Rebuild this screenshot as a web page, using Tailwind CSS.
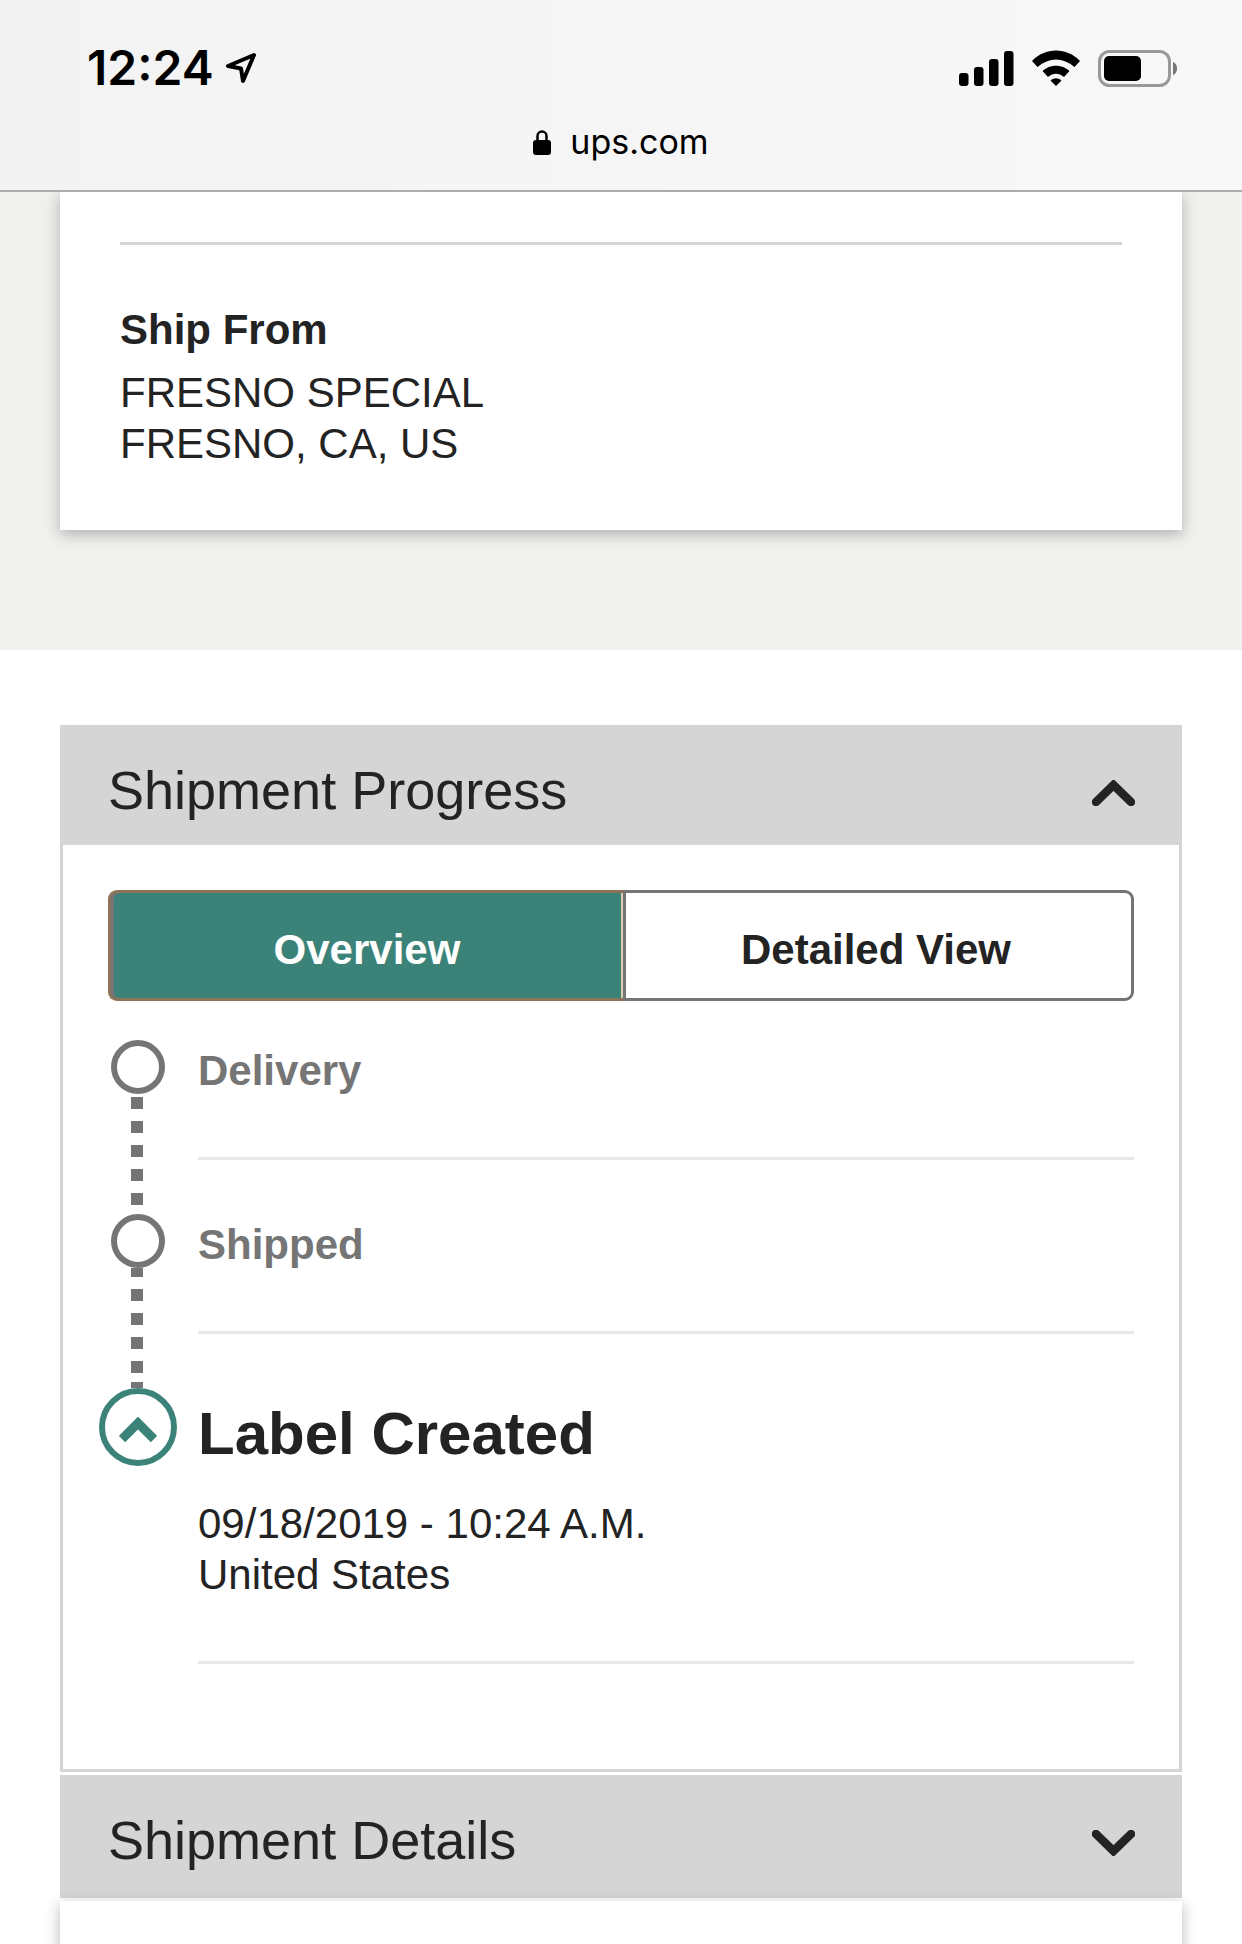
<!DOCTYPE html>
<html>
  <head>
    <meta charset="UTF-8" />
    <script src="https://cdn.jsdelivr.net/npm/@tailwindcss/browser@4"></script>
  </head>
  <body class="bg-white font-['Liberation_Sans',Arial,sans-serif] text-[#232323]">
    <div class="h-[1944px] w-[1242px] overflow-hidden">
      <!-- browser chrome -->
      <header class="relative z-10 h-[192px] bg-linear-to-r from-[#f3f3f3] to-[#f8f8f8] border-b-2 border-[#acacac] flex flex-col">
        <div class="flex justify-between items-center h-[68px] mt-[34px] pl-[87px] pr-[65px]">
          <div class="flex items-center gap-[11px]">
            <span class="font-['Inter',sans-serif] font-semibold text-[48px] leading-none text-black">12:24</span>
            <svg class="w-[32px] h-[34px]" viewBox="0 0 32 34" fill="none" stroke="#000" stroke-width="4" stroke-linejoin="round">
              <path d="M29 4 L3 15 L16 17.5 L18 30 Z" />
            </svg>
          </div>
          <div class="flex items-center gap-[18px]">
            <svg class="w-[55px] h-[35px]" viewBox="0 0 55 35" fill="#000">
              <rect x="0" y="22" width="9.5" height="13" rx="3" />
              <rect x="15" y="16" width="9.5" height="19" rx="3" />
              <rect x="30" y="8" width="9.5" height="27" rx="3" />
              <rect x="45" y="0" width="9.5" height="35" rx="3" />
            </svg>
            <svg class="w-[48px] h-[36px]" viewBox="0 0 48 36" fill="#000">
              <path d="M0 11 C13 -3 35 -3 48 11 L42.5 17 C31 7 17 7 5.5 17 Z" />
              <path d="M10.5 21 C18 14 30 14 37.5 21 L32 27 C27 22.5 21 22.5 16 27 Z" />
              <path d="M24 36 L18.5 30.5 C22 27.5 26 27.5 29.5 30.5 Z" />
            </svg>
            <svg class="w-[79px] h-[37px]" viewBox="0 0 79 37">
              <rect x="1.5" y="1.5" width="70" height="34" rx="10" fill="none" stroke="#999999" stroke-width="3" />
              <rect x="6" y="6" width="37" height="25" rx="5" fill="#000" />
              <path d="M75 12 C78 13 79 16 79 18.5 C79 21 78 24 75 25 Z" fill="#777777" />
            </svg>
          </div>
        </div>
        <div class="flex justify-center items-center gap-[19px] mt-[18px]">
          <svg class="w-[18px] h-[26px]" viewBox="0 0 18 26">
            <path d="M4.5 12 V7 a4.5 4.5 0 0 1 9 0 V12" fill="none" stroke="#000" stroke-width="2.5" />
            <rect x="0" y="11" width="18" height="15" rx="3" fill="#000" />
          </svg>
          <span class="font-['Inter',sans-serif] text-[34px] leading-[44px] text-black">ups.com</span>
        </div>
      </header>

      <!-- ship from card -->
      <section class="bg-[#f0f0ee] h-[458px] px-[60px]">
        <div class="bg-white h-[338px] px-[60px] pt-[50px] shadow-[0_4px_14px_rgba(0,0,0,0.28)]">
          <div class="h-[3px] bg-[#d5d5d5]"></div>
          <h3 class="font-bold text-[42px] leading-[48px] mt-[61px]">Ship From</h3>
          <p class="text-[42px] leading-[51px] mt-[13px]">FRESNO SPECIAL<br />FRESNO, CA, US</p>
        </div>
      </section>

      <!-- accordions -->
      <section class="px-[60px] pt-[75px]">
        <div class="h-[120px] bg-[#d5d5d5] flex items-center justify-between pl-[48px] pr-[47px]">
          <h2 class="text-[54px] leading-none mt-[10px]">Shipment Progress</h2>
          <svg class="w-[43px] h-[26px] mt-[16px]" viewBox="0 0 43 26" fill="none" stroke="#232323" stroke-width="8.5" stroke-linecap="round" stroke-linejoin="miter">
            <path d="M4 22 L21.5 5 L39 22" />
          </svg>
        </div>

        <div class="h-[927px] border-x-[3px] border-b-[3px] border-[#d5d5d5] pl-[45px] pr-[45px] pt-[45px]">
          <div class="flex h-[111px] font-bold text-[42px]">
            <button class="w-[515px] pt-[8px] bg-[#3b8279] text-white border-y-[3px] border-l-[3px] border-[#8c7459] rounded-l-[9px] shadow-[inset_3px_0_0_#757575,inset_-2px_0_0_#d9cfae]">Overview</button>
            <button class="flex-1 pt-[8px] pr-[5px] bg-white text-[#232323] border-[3px] border-[#757575] rounded-r-[9px]">Detailed View</button>
          </div>

          <div class="mt-[39px] flex flex-col">
            <!-- Delivery -->
            <div class="flex h-[174px]">
              <div class="w-[90px] -ml-[15px] mr-[15px] shrink-0 flex flex-col items-center">
                <div class="w-[54px] h-[54px] rounded-full border-[6px] border-[#757575] bg-white"></div>
                <div class="flex flex-col gap-[12px] mt-[3px] -ml-[2px]">
                  <div class="w-[12px] h-[12px] bg-[#757575]"></div>
                  <div class="w-[12px] h-[12px] bg-[#757575]"></div>
                  <div class="w-[12px] h-[12px] bg-[#757575]"></div>
                  <div class="w-[12px] h-[12px] bg-[#757575]"></div>
                  <div class="w-[12px] h-[12px] bg-[#757575]"></div>
                </div>
              </div>
              <div class="flex-1">
                <h4 class="font-bold text-[42px] leading-[52px] mt-[5px] text-[#757575]">Delivery</h4>
                <div class="h-[3px] bg-[#e8e8e8] mt-[60px]"></div>
              </div>
            </div>
            <!-- Shipped -->
            <div class="flex h-[174px]">
              <div class="w-[90px] -ml-[15px] mr-[15px] shrink-0 flex flex-col items-center">
                <div class="w-[54px] h-[54px] rounded-full border-[6px] border-[#757575] bg-white"></div>
                <div class="flex flex-col gap-[12px] -ml-[2px]">
                  <div class="w-[12px] h-[9px] bg-[#757575]"></div>
                  <div class="w-[12px] h-[12px] bg-[#757575]"></div>
                  <div class="w-[12px] h-[12px] bg-[#757575]"></div>
                  <div class="w-[12px] h-[12px] bg-[#757575]"></div>
                  <div class="w-[12px] h-[12px] bg-[#757575]"></div>
                  <div class="w-[12px] h-[6px] -mt-[3px] bg-[#757575]"></div>
                </div>
              </div>
              <div class="flex-1">
                <h4 class="font-bold text-[42px] leading-[52px] mt-[5px] text-[#757575]">Shipped</h4>
                <div class="h-[3px] bg-[#e8e8e8] mt-[60px]"></div>
              </div>
            </div>
            <!-- Label Created -->
            <div class="flex">
              <div class="w-[90px] -ml-[15px] mr-[15px] shrink-0 flex flex-col items-center">
                <div class="w-[78px] h-[78px] rounded-full border-[6px] border-[#3b8279] bg-white flex items-center justify-center">
                  <svg class="w-[38px] h-[26px] mt-[5px]" viewBox="0 0 38 26" fill="none" stroke="#3b8279" stroke-width="9" stroke-linejoin="miter">
                    <path d="M3 22 L19 6 L35 22" />
                  </svg>
                </div>
              </div>
              <div class="flex-1">
                <h3 class="font-bold text-[60px] leading-[78px] mt-[7px]">Label Created</h3>
                <p class="text-[42px] leading-[51px] mt-[25px]">09/18/2019 - 10:24 A.M.<br />United States</p>
                <div class="h-[3px] bg-[#e8e8e8] mt-[61px]"></div>
              </div>
            </div>
          </div>
        </div>

        <div class="h-[123px] mt-[3px] bg-[#d5d5d5] flex items-center justify-between pl-[48px] pr-[47px]">
          <h2 class="text-[54px] leading-none mt-[7px]">Shipment Details</h2>
          <svg class="w-[43px] h-[26px] mt-[12px]" viewBox="0 0 43 26" fill="none" stroke="#232323" stroke-width="8.5" stroke-linecap="round" stroke-linejoin="miter">
            <path d="M4 4 L21.5 21 L39 4" />
          </svg>
        </div>
        <div class="h-[60px] mt-[3px] bg-white shadow-[0_4px_14px_rgba(0,0,0,0.28)]"></div>
      </section>
    </div>
  </body>
</html>
